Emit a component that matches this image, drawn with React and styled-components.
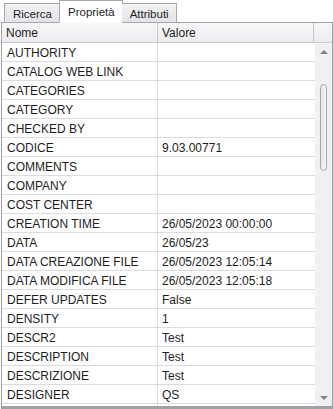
import React from 'react';
import styled, { createGlobalStyle } from 'styled-components';

const GlobalStyle = createGlobalStyle`
  html, body {
    margin: 0;
    padding: 0;
    background: #ffffff;
  }
  body {
    font-family: "Liberation Sans", Arial, sans-serif;
    font-size: 12px;
    color: #1e1e1e;
  }
`;

const Frame = styled.div`
  width: 333px;
  height: 409px;
  display: flex;
  flex-direction: column;
  overflow: hidden;
`;

const TabStrip = styled.div`
  display: flex;
  align-items: flex-end;
  height: 23px;
  padding-left: 4px;
  margin-bottom: -1px;
  position: relative;
  z-index: 1;
`;

const Tab = styled.div`
  box-sizing: border-box;
  height: ${p => (p.$active ? '23px' : '20px')};
  padding: ${p => (p.$active ? '0 7px 0 8px' : '1px 7px 0 8px')};
  display: flex;
  align-items: center;
  font-size: 11.5px;
  color: #1e1e1e;
  border: 1px solid #a7a7ad;
  border-bottom-color: ${p => (p.$active ? '#ffffff' : '#a7a7ad')};
  border-left: ${p => (p.$first || p.$active ? '1px solid #a7a7ad' : 'none')};
  background: ${p => (p.$active ? '#ffffff' : 'linear-gradient(#f3f3f5, #e4e4e8)')};
  margin-left: ${p => (p.$active ? '-1px' : '0')};
  margin-right: ${p => (p.$active ? '-1px' : '0')};
`;

const Panel = styled.div`
  flex: 1;
  min-height: 0;
  margin-left: 1px;
  border: 1px solid #a0a0a6;
  border-bottom-width: 3px;
  display: flex;
  flex-direction: column;
  background: #ffffff;
`;

const HeaderRow = styled.div`
  display: grid;
  grid-template-columns: 156px 156px 1fr;
  height: 19px;
  border-bottom: 1px solid #c9c9ce;
  background: linear-gradient(#f7f7f9, #ececf0);
`;

const HeaderCell = styled.div`
  display: flex;
  align-items: center;
  padding: 1px 0 0 4px;
  font-size: 12px;
  color: #1e1e1e;
  border-right: ${p => (p.$last ? 'none' : '1px solid #c9c9ce')};
`;

const Body = styled.div`
  flex: 1;
  min-height: 0;
  display: flex;
`;

const Grid = styled.div`
  flex: 1;
  overflow: hidden;
`;

const Row = styled.div`
  display: grid;
  grid-template-columns: 156px 1fr;
  height: 18px;
  border-bottom: 1px solid #dcdce0;
`;

const Cell = styled.div`
  display: flex;
  align-items: center;
  padding: 2px 0 0 ${p => (p.$value ? '4px' : '5px')};
  font-size: 12px;
  color: #1e1e1e;
  white-space: nowrap;
  overflow: hidden;
  border-right: ${p => (p.$value ? 'none' : '1px solid #dcdce0')};
`;

const ScrollBar = styled.div`
  width: 17px;
  background: #f0f0f3;
  display: flex;
  flex-direction: column;
  align-items: center;
`;

const Arrow = styled.div`
  width: 0;
  height: 0;
  margin: ${p => (p.$down ? 'auto 0 6px' : '7px 0 0')};
  border-left: 4px solid transparent;
  border-right: 4px solid transparent;
  ${p => (p.$down ? 'border-top: 4px solid #808086;' : 'border-bottom: 4px solid #808086;')}
`;

const Thumb = styled.div`
  margin-top: 30px;
  width: 5px;
  height: 85px;
  border: 1px solid #a8a8b0;
  border-radius: 4px;
  background: linear-gradient(90deg, #e4e4ea, #f4f4f8);
`;

const rows = [
  ['AUTHORITY', ''],
  ['CATALOG WEB LINK', ''],
  ['CATEGORIES', ''],
  ['CATEGORY', ''],
  ['CHECKED BY', ''],
  ['CODICE', '9.03.00771'],
  ['COMMENTS', ''],
  ['COMPANY', ''],
  ['COST CENTER', ''],
  ['CREATION TIME', '26/05/2023 00:00:00'],
  ['DATA', '26/05/23'],
  ['DATA CREAZIONE FILE', '26/05/2023 12:05:14'],
  ['DATA MODIFICA FILE', '26/05/2023 12:05:18'],
  ['DEFER UPDATES', 'False'],
  ['DENSITY', '1'],
  ['DESCR2', 'Test'],
  ['DESCRIPTION', 'Test'],
  ['DESCRIZIONE', 'Test'],
  ['DESIGNER', 'QS'],
  ['', ''],
];

export default function App() {
  return (
    <>
      <GlobalStyle />
      <Frame>
        <TabStrip>
          <Tab $first>Ricerca</Tab>
          <Tab $active>Proprietà</Tab>
          <Tab>Attributi</Tab>
        </TabStrip>
        <Panel>
          <HeaderRow>
            <HeaderCell>Nome</HeaderCell>
            <HeaderCell>Valore</HeaderCell>
            <HeaderCell $last />
          </HeaderRow>
          <Body>
            <Grid>
              {rows.map(([name, value], i) => (
                <Row key={i}>
                  <Cell>{name}</Cell>
                  <Cell $value>{value}</Cell>
                </Row>
              ))}
            </Grid>
            <ScrollBar>
              <Arrow />
              <Thumb />
              <Arrow $down />
            </ScrollBar>
          </Body>
        </Panel>
      </Frame>
    </>
  );
}
